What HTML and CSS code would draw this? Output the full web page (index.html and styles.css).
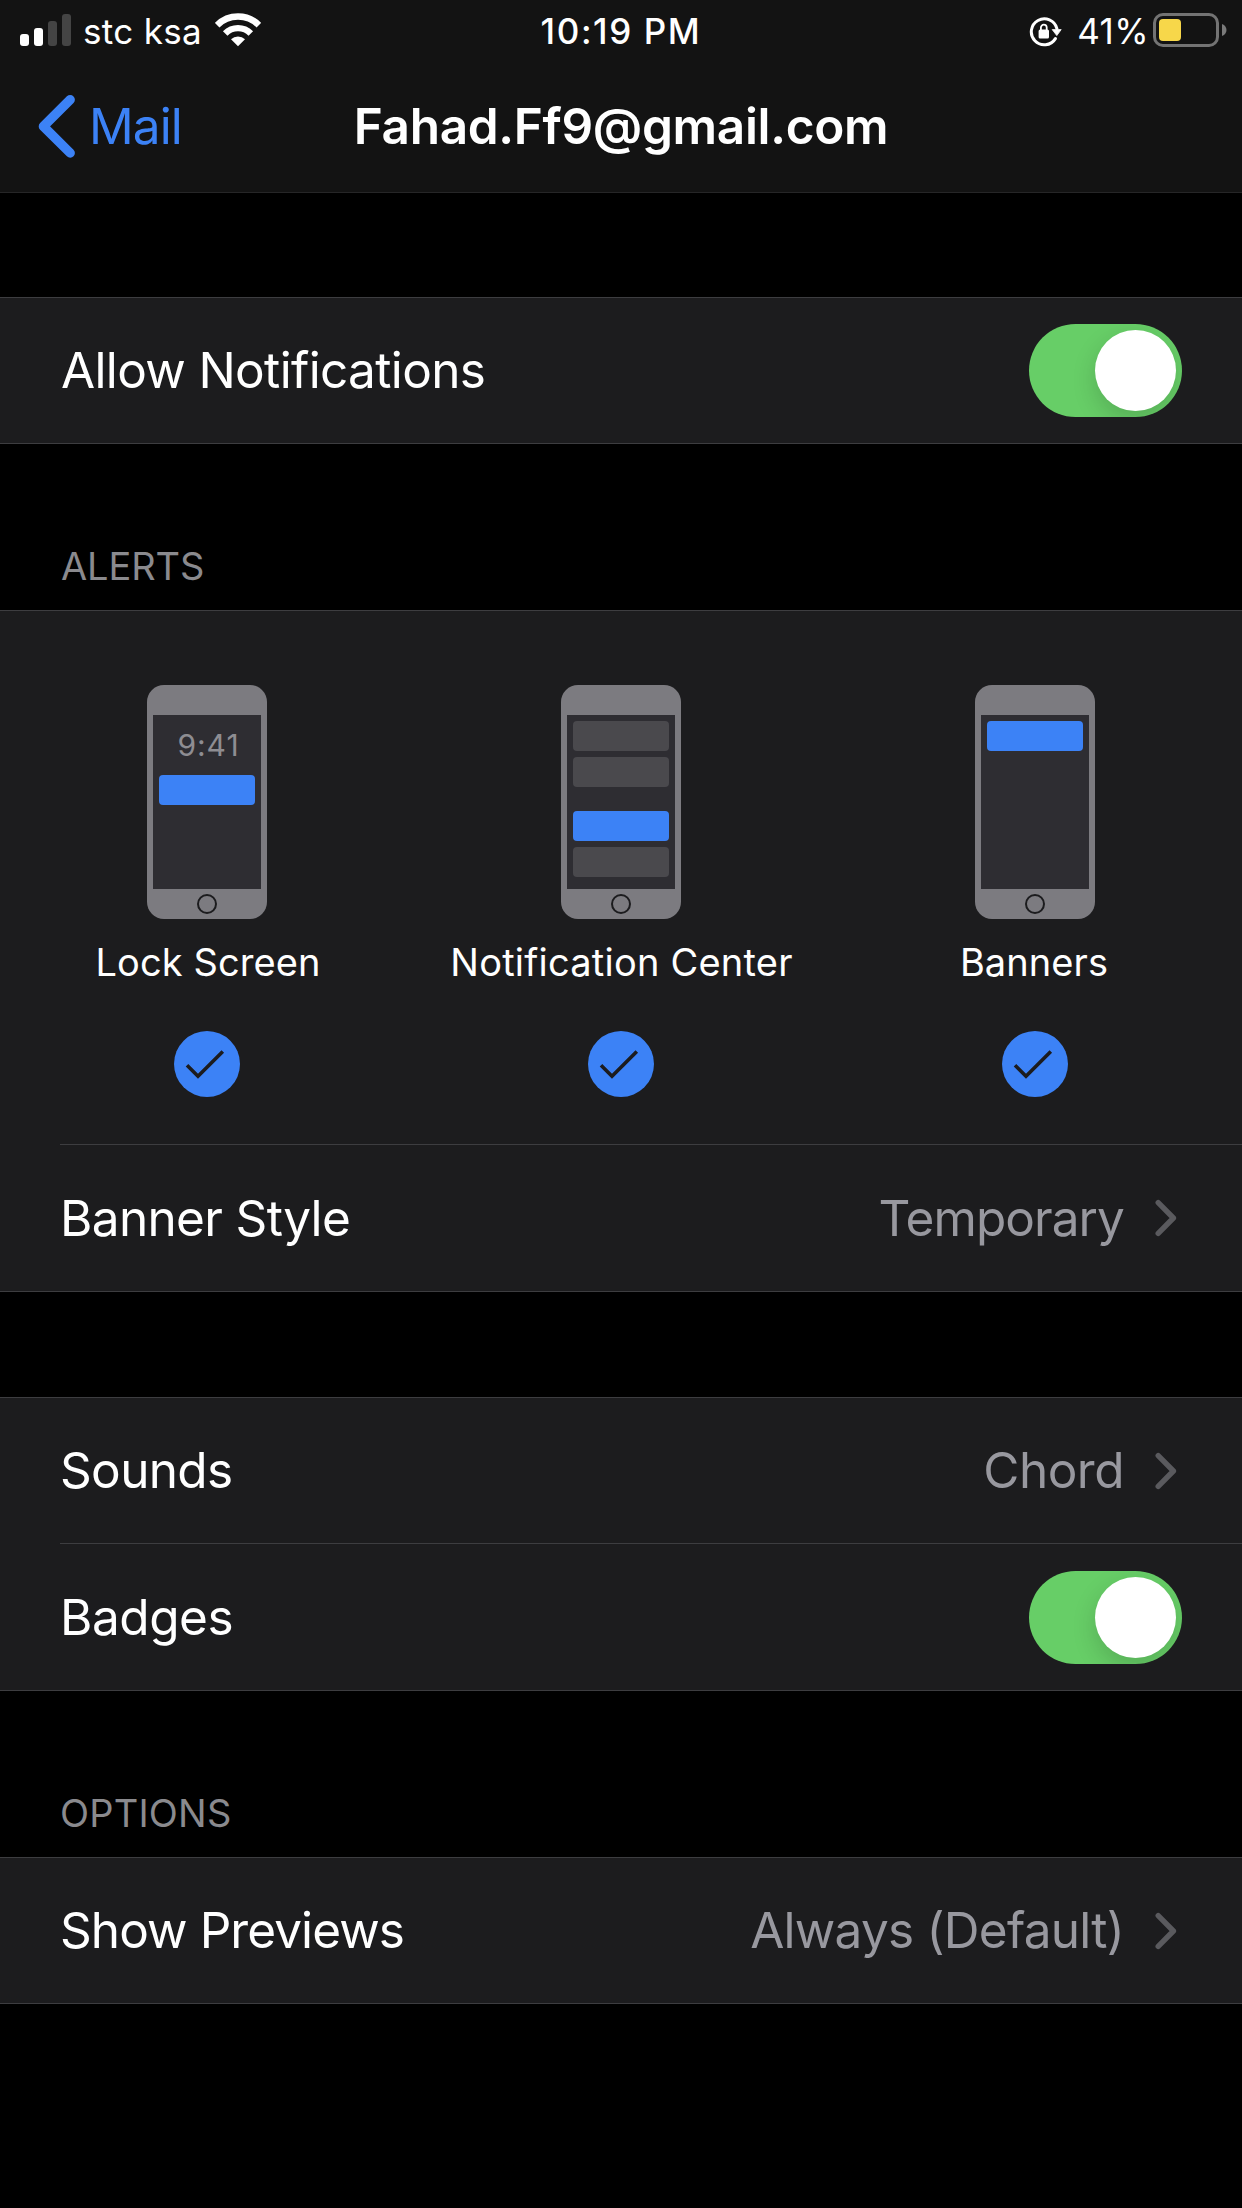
FILE: index.html
```html
<!DOCTYPE html>
<html lang="en">
<head>
    <meta charset="UTF-8">
    <meta name="viewport" content="width=device-width, initial-scale=1.0">
    <title>Mail Notifications</title>
    <link rel="stylesheet" href="styles.css">
</head>
<body>
    <header class="header">
        <div class="status-bar">
            <div class="status-left">
                <div class="signal">
                    <span class="bar bar-1"></span>
                    <span class="bar bar-2"></span>
                    <span class="bar bar-3 off"></span>
                    <span class="bar bar-4 off"></span>
                </div>
                <span class="carrier">stc ksa</span>
                <svg class="wifi" width="46" height="34" viewBox="0 0 46 34">
                    <path d="M2.1 12.2A29.5 29.5 0 0 1 43.9 12.2" fill="none" stroke="#fff" stroke-width="6.6"/>
                    <path d="M10.2 20.4A18.1 18.1 0 0 1 35.8 20.4" fill="none" stroke="#fff" stroke-width="6.4"/>
                    <path d="M23 33.2L16 26.3A10 10 0 0 1 30 26.3Z" fill="#fff"/>
                </svg>
            </div>
            <span class="time">10:19 PM</span>
            <div class="status-right">
                <svg class="rotation-lock" width="34" height="32" viewBox="0 0 34 32">
                    <path d="M27.9 12.6A13 13 0 1 0 26.4 22.6" fill="none" stroke="#fff" stroke-width="3" stroke-linecap="round"/>
                    <path d="M23.2 13.6H32.2L27.8 19.6Z" fill="#fff" stroke="#fff" stroke-width="0.8" stroke-linejoin="round"/>
                    <rect x="9.6" y="13.6" width="10.4" height="9" rx="1.5" fill="#fff"/>
                    <path d="M11.9 14.5V11.6A2.9 2.9 0 0 1 17.7 11.6V14.5" fill="none" stroke="#fff" stroke-width="1.8"/>
                </svg>
                <span class="percent">41%</span>
                <div class="battery"><span class="battery-level"></span></div>
                <svg class="battery-cap" width="5" height="12" viewBox="0 0 5 12">
                    <path d="M0 0C6 2 6 10 0 12Z" fill="#7a7a7a"/>
                </svg>
            </div>
        </div>
        <nav class="nav-bar">
            <a class="back">
                <svg width="38" height="64" viewBox="0 0 38 64">
                    <path d="M32.2 5.7L5.4 32.4L32.2 59" fill="none" stroke="#3c82f6" stroke-width="9.4" stroke-linecap="round" stroke-linejoin="round"/>
                </svg>
                <span>Mail</span>
            </a>
            <h1>Fahad.Ff9@gmail.com</h1>
        </nav>
    </header>

    <main>
        <section class="group group-first">
            <div class="row">
                <span class="label allow">Allow Notifications</span>
                <span class="toggle"><span class="knob"></span></span>
            </div>
        </section>

        <h2 class="alerts-title">ALERTS</h2>
        <section class="group">
            <div class="alert-types">
                <div class="alert-type">
                    <div class="phone">
                        <div class="screen">
                            <span class="clock">9:41</span>
                            <span class="note active"></span>
                        </div>
                        <span class="home"></span>
                    </div>
                    <span class="caption lock-caption">Lock Screen</span>
                    <svg class="check" width="66" height="66" viewBox="0 0 66 66">
                        <circle cx="33" cy="33" r="33" fill="#3c82f6"/>
                        <path d="M13 34.3L24 45.3L48.8 20.4" fill="none" stroke="#1c1c1e" stroke-width="3.6"/>
                    </svg>
                </div>
                <div class="alert-type">
                    <div class="phone">
                        <div class="screen">
                            <span class="note"></span>
                            <span class="note"></span>
                            <span class="note active spaced"></span>
                            <span class="note"></span>
                        </div>
                        <span class="home"></span>
                    </div>
                    <span class="caption center-caption">Notification Center</span>
                    <svg class="check" width="66" height="66" viewBox="0 0 66 66">
                        <circle cx="33" cy="33" r="33" fill="#3c82f6"/>
                        <path d="M13 34.3L24 45.3L48.8 20.4" fill="none" stroke="#1c1c1e" stroke-width="3.6"/>
                    </svg>
                </div>
                <div class="alert-type">
                    <div class="phone">
                        <div class="screen">
                            <span class="note active"></span>
                        </div>
                        <span class="home"></span>
                    </div>
                    <span class="caption banners-caption">Banners</span>
                    <svg class="check" width="66" height="66" viewBox="0 0 66 66">
                        <circle cx="33" cy="33" r="33" fill="#3c82f6"/>
                        <path d="M13 34.3L24 45.3L48.8 20.4" fill="none" stroke="#1c1c1e" stroke-width="3.6"/>
                    </svg>
                </div>
            </div>
            <div class="separator"></div>
            <div class="row row-tall">
                <span class="label">Banner Style</span>
                <span class="value temporary">Temporary</span>
                <svg class="chevron" width="22" height="38" viewBox="0 0 22 38">
                    <path d="M3.2 3.6L18.4 19L3.2 34.4" fill="none" stroke="#5a5a5e" stroke-width="5.4" stroke-linecap="round" stroke-linejoin="round"/>
                </svg>
            </div>
        </section>

        <section class="group group-sounds">
            <div class="row">
                <span class="label">Sounds</span>
                <span class="value chord">Chord</span>
                <svg class="chevron" width="22" height="38" viewBox="0 0 22 38">
                    <path d="M3.2 3.6L18.4 19L3.2 34.4" fill="none" stroke="#5a5a5e" stroke-width="5.4" stroke-linecap="round" stroke-linejoin="round"/>
                </svg>
            </div>
            <div class="separator"></div>
            <div class="row row-tall">
                <span class="label badges">Badges</span>
                <span class="toggle"><span class="knob"></span></span>
            </div>
        </section>

        <h2 class="options-title">OPTIONS</h2>
        <section class="group">
            <div class="row">
                <span class="label previews">Show Previews</span>
                <span class="value">Always (Default)</span>
                <svg class="chevron" width="22" height="38" viewBox="0 0 22 38">
                    <path d="M3.2 3.6L18.4 19L3.2 34.4" fill="none" stroke="#5a5a5e" stroke-width="5.4" stroke-linecap="round" stroke-linejoin="round"/>
                </svg>
            </div>
        </section>
    </main>
</body>
</html>
```
FILE: styles.css
```css
* {
    box-sizing: border-box;
}

body {
    margin: 0;
    background-color: #000;
    color: #fff;
    font-family: Inter, sans-serif;
    font-size: 49.5px;
    min-height: 100vh;
}

svg {
    display: block;
    flex: none;
}

/* Header */
.header {
    height: 193px;
    background-color: #131313;
    border-bottom: 1px solid #262627;
}

.status-bar {
    display: grid;
    grid-template-columns: 1fr auto 1fr;
    height: 60px;
    padding: 0 15px 0 20px;
    font-size: 35px;
    line-height: 62px;
}

.status-left,
.status-right {
    display: flex;
    align-items: flex-start;
}

.status-right {
    justify-content: flex-end;
}

.signal {
    display: flex;
    align-items: flex-end;
    gap: 5px;
    height: 46px;
    margin-right: 12px;
}

.bar {
    width: 9px;
    background-color: #fff;
    border-radius: 3px;
}

.bar-1 { height: 12px; }
.bar-2 { height: 18px; }
.bar-3 { height: 25px; }
.bar-4 { height: 32px; }

.bar.off {
    background-color: #444;
}

.carrier {
    letter-spacing: 0.32px;
}

.wifi {
    margin: 13px 0 0 13px;
}

.time {
    margin-left: -5px;
    font-weight: 500;
    letter-spacing: 1.6px;
}

.rotation-lock {
    margin: 16px 14px 0 0;
}

.percent {
    letter-spacing: 0.4px;
    margin-right: 4px;
}

.battery {
    width: 66px;
    height: 34px;
    margin-top: 13px;
    padding: 3px;
    border: 3px solid #737373;
    border-radius: 10px;
}

.battery-level {
    display: block;
    width: 22px;
    height: 22px;
    background-color: #f7d74a;
    border-radius: 4px;
}

.battery-cap {
    margin: 24px 0 0 3px;
}

.nav-bar {
    display: grid;
    grid-template-columns: 1fr auto 1fr;
    align-items: center;
    height: 132px;
    padding: 0 38px;
}

.back {
    display: flex;
    align-items: center;
    gap: 13px;
    color: #3c82f6;
    letter-spacing: -0.9px;
}

h1 {
    margin: 0;
    font-size: 49.5px;
    font-weight: 600;
    letter-spacing: -0.32px;
}

/* Settings groups */
.group {
    background-color: #1c1c1e;
    border-top: 1px solid #3d3d40;
    border-bottom: 1px solid #3d3d40;
}

.group-first {
    margin-top: 104px;
}

.group-sounds {
    margin-top: 105px;
}

h2 {
    display: flex;
    align-items: flex-end;
    height: 166px;
    margin: 0;
    padding: 0 60px 21px;
    color: #8a8a8e;
    font-size: 38px;
    font-weight: 400;
    line-height: 46px;
}

.alerts-title {
    padding-left: 61px;
    letter-spacing: -0.1px;
}

.options-title {
    letter-spacing: 0.2px;
}

.row {
    display: flex;
    align-items: center;
    height: 145px;
    padding: 0 60px;
}

.row-tall {
    height: 146px;
}

.separator {
    height: 1px;
    margin-left: 60px;
    background-color: #3d3d40;
}

.label {
    flex: 1;
    padding-bottom: 2px;
    letter-spacing: -0.65px;
}

.row-tall .label,
.row-tall .value {
    padding-bottom: 0;
}

.allow {
    padding-left: 1px;
}

.label.badges {
    letter-spacing: -0.45px;
}

.previews {
    letter-spacing: -0.92px;
}

.value {
    padding-bottom: 2px;
    color: #98989f;
    letter-spacing: -0.75px;
}

.temporary {
    letter-spacing: -0.93px;
}

.chord {
    letter-spacing: -0.5px;
}

.chevron {
    margin: 0 5px 0 31px;
}

.toggle {
    display: flex;
    justify-content: flex-end;
    width: 153px;
    height: 93px;
    padding: 6px;
    background-color: #67ce67;
    border-radius: 47px;
    overflow: hidden;
}

.knob {
    width: 81px;
    height: 81px;
    background-color: #fff;
    border-radius: 50%;
    box-shadow: 0 9px 24px rgba(0, 0, 0, 0.16);
}

/* Alert styles */
.alert-types {
    display: grid;
    grid-template-columns: repeat(3, 1fr);
    height: 533px;
    padding-top: 74px;
}

.alert-type {
    display: flex;
    flex-direction: column;
    align-items: center;
}

.phone {
    display: flex;
    flex-direction: column;
    align-items: center;
    width: 120px;
    height: 234px;
    padding: 30px 6px 0;
    background-color: #7c7b80;
    border-radius: 17px;
}

.screen {
    display: flex;
    flex-direction: column;
    gap: 6px;
    width: 108px;
    height: 174px;
    padding: 6px;
    background-color: #2e2d32;
}

.clock {
    height: 48px;
    padding-left: 3px;
    color: #8e8d92;
    font-size: 30px;
    line-height: 48px;
    letter-spacing: 1px;
    text-align: center;
}

.note {
    flex: none;
    height: 30px;
    background-color: #4a494d;
    border-radius: 4px;
}

.note.active {
    background-color: #3c82f6;
}

.note.spaced {
    margin-top: 18px;
}

.home {
    width: 20px;
    height: 20px;
    margin-top: 5px;
    border: 2px solid #1c1c1e;
    border-radius: 50%;
}

.caption {
    margin-top: 20px;
    font-size: 38px;
    line-height: 46px;
    letter-spacing: 0.08px;
}

.lock-caption {
    padding-left: 2px;
}

.center-caption {
    padding-left: 1px;
    letter-spacing: 0.22px;
}

.banners-caption {
    padding-right: 2px;
}

.check {
    margin-top: 46px;
}
```
